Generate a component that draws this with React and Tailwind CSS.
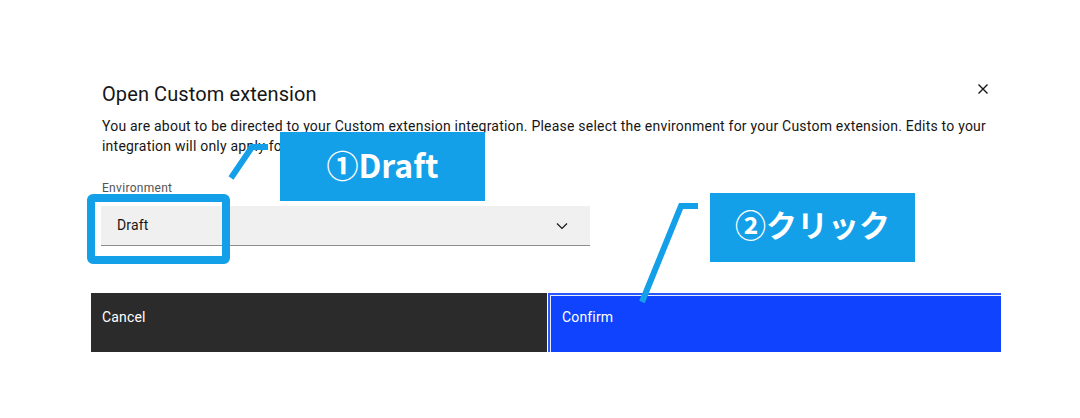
const ui = { fontFamily: 'Roboto, "Liberation Sans", sans-serif' };
const jp = { fontFamily: '"Noto Sans CJK JP", "Noto Sans", sans-serif' };

const CloseIcon = () => (
  <svg width="12" height="12" viewBox="0 0 12 12" fill="none">
    <path d="M1.5 1.5L10.5 10.5M10.5 1.5L1.5 10.5" stroke="#161616" strokeWidth="1.4" />
  </svg>
);

const ChevronDown = () => (
  <svg width="12" height="8" viewBox="0 0 12 8" fill="none">
    <path d="M1 1.5L6 6.5L11 1.5" stroke="#161616" strokeWidth="1.2" />
  </svg>
);

export default function App() {
  return (
    <div className="relative w-[1080px] h-[418px] bg-white overflow-hidden" style={ui}>
      <div className="ml-[91px] w-[910px]">
        <div className="flex items-start justify-between pl-[11px] pt-[80px]">
          <h2 className="text-[20px] leading-[28px] text-[#161616] tracking-[0.1px]">Open Custom extension</h2>
          <button className="mr-[10px] mt-[1px] p-[2px]">
            <CloseIcon />
          </button>
        </div>
        <p className="mt-[8px] pl-[11px] pr-[12px] text-[14px] leading-[20px] text-[#161616] tracking-[0.22px]">
          You are about to be directed to your Custom extension integration. Please select the environment for your Custom extension. Edits to your integration will only apply for the selected environment.
        </p>
        <div className="mt-[24px] pl-[10px]">
          <label className="block text-[12px] leading-[16px] text-[#525252] pl-[1px] tracking-[0.3px]">Environment</label>
          <div className="mt-[10px] w-[489px] h-[40px] bg-[#f0f0f0] border-b border-[#8d8d8d] flex items-center justify-between pl-[16px] pr-[22px]">
            <span className="text-[14px] text-[#161616] tracking-[0.16px]">Draft</span>
            <ChevronDown />
          </div>
        </div>
        <div className="mt-[47px] flex h-[59px]">
          <button className="w-[456px] bg-[#2b2b2b] text-white text-[14px] leading-[20px] text-left pl-[11px] pt-[14px] flex items-start tracking-[0.16px]">
            Cancel
          </button>
          <button className="flex-1 ml-[1px] bg-[#0f43fe] text-white text-[14px] leading-[20px] text-left pl-[14px] pt-[14px] flex items-start tracking-[0.16px] shadow-[inset_2px_2px_0_0_#2a56ff,inset_3px_3px_0_0_#e8ecff]">
            Confirm
          </button>
        </div>
      </div>

      {/* annotation overlays */}
      <div className="absolute left-[87px] top-[194px] w-[143px] h-[70px] border-[8px] border-[#14a0e9] rounded-[6px]" />
      <svg className="absolute left-0 top-0" width="1080" height="418">
        <polyline points="231,178 252,147 268,147" fill="none" stroke="#14a0e9" strokeWidth="6" />
        <polyline points="642,302 681,206 698,206" fill="none" stroke="#14a0e9" strokeWidth="6" />
      </svg>
      <div
        className="absolute left-[280px] top-[132px] w-[205px] h-[69px] bg-[#14a0e9] text-white font-bold text-[32px] flex items-center justify-center pb-[6px]"
        style={jp}
      >
        ①Draft
      </div>
      <div
        className="absolute left-[710px] top-[193px] w-[205px] h-[69px] bg-[#14a0e9] text-white font-bold text-[31px] flex items-center justify-center pb-[6px]"
        style={jp}
      >
        ②クリック
      </div>
    </div>
  );
}
